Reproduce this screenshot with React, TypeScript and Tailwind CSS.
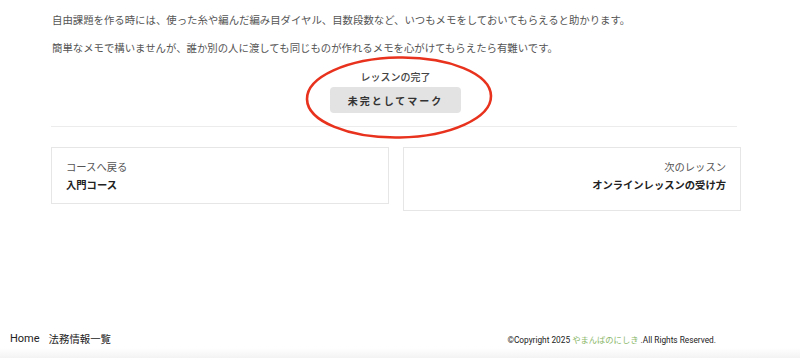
import React from 'react';

const jp = { fontFamily: '"Noto Sans CJK JP", "Noto Sans", sans-serif' };

function NavCard({ label, title, align }: { label: string; title: string; align: 'left' | 'right' }) {
  return (
    <a
      href="#"
      className={`flex-1 border border-[#e6e6e6] bg-white px-[14px] flex flex-col ${
        align === 'right' ? 'items-end h-[64px] pt-[11px]' : 'items-start h-[57px] pt-[11px]'
      }`}
    >
      <span className="text-[10.3px] leading-[16px] text-[#555]">{label}</span>
      <span className="text-[10.3px] leading-[20px] font-bold text-[#222]">{title}</span>
    </a>
  );
}

export default function App() {
  return (
    <div className="relative w-[800px] h-[358px] bg-white flex flex-col overflow-hidden" style={jp}>
      <div className="w-[690px] ml-[51px] flex flex-col">
        <p className="pt-[11px] text-[10.4px] leading-[18px] text-[#555] pl-px">
          自由課題を作る時には、使った糸や編んだ編み目ダイヤル、目数段数など、いつもメモをしておいてもらえると助かります。
        </p>
        <p className="mt-[10px] text-[10.4px] leading-[18px] text-[#555] pl-px">
          簡単なメモで構いませんが、誰か別の人に渡しても同じものが作れるメモを心がけてもらえたら有難いです。
        </p>

        <div className="flex flex-col items-center mt-[12px] mr-[1px]">
          <span className="text-[10px] leading-[16px] font-medium text-[#444]">レッスンの完了</span>
          <button
            type="button"
            className="mt-[2px] w-[131px] h-[26px] rounded-[4px] bg-[#e3e3e3] text-[10px] font-bold tracking-[2px] text-[#333]"
          >
            未完としてマーク
          </button>
        </div>

        <div className="mt-[13px] h-px bg-[#ececec] mr-[4px]" />

        <div className="mt-[20px] flex items-start gap-[14px]">
          <NavCard label="コースへ戻る" title="入門コース" align="left" />
          <NavCard label="次のレッスン" title="オンラインレッスンの受け方" align="right" />
        </div>
      </div>

      <div className="flex-1" />

      <footer className="relative h-[40px] flex items-start pt-[13px] px-[10px]">
        <div className="flex gap-[9px] text-[#222]">
          <a href="#" className="text-[11px] leading-[16px]" style={{ fontFamily: 'Roboto, "Noto Sans CJK JP", sans-serif' }}>
            Home
          </a>
          <a href="#" className="text-[10.4px] leading-[16px]">
            法務情報一覧
          </a>
        </div>
        <p
          className="ml-auto mr-[74px] text-[8.3px] leading-[16px] text-[#222]"
          style={{ fontFamily: 'Roboto, "Noto Sans CJK JP", sans-serif' }}
        >
          ©Copyright 2025 <span className="text-[#8bb86a]" style={jp}>やまんばのにしき</span> .All Rights Reserved.
        </p>
        <div className="absolute left-0 right-0 bottom-0 h-[10px] bg-gradient-to-b from-white to-[#f3f3f3]" />
      </footer>

      <svg className="absolute left-0 top-0 pointer-events-none" width="800" height="358" viewBox="0 0 800 358">
        <ellipse cx="399" cy="97.5" rx="92" ry="40" fill="none" stroke="#e8321e" strokeWidth="2.6" transform="rotate(-1 399 97.5)" />
      </svg>
    </div>
  );
}
